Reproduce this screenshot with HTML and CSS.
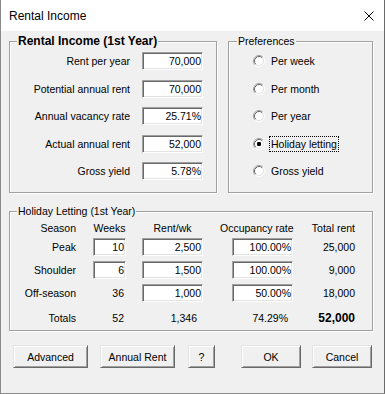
FILE: index.html
```html
<!DOCTYPE html>
<html>
<head>
<meta charset="utf-8">
<link rel="stylesheet" href="styles.css">
</head>
<body>
<div class="window">
  <div class="titlebar">
    <span class="title">Rental Income</span>
    <svg class="close" width="10" height="10" viewBox="0 0 10 10"><path d="M0.5 0.5 L9.5 9.5 M9.5 0.5 L0.5 9.5" stroke="#000" stroke-width="1" fill="none"/></svg>
  </div>
  <div class="content">
    <div class="top-row">
      <div class="group group-income">
        <div class="group-title bold">Rental Income (1st Year)</div>
        <div class="form-grid">
          <div class="lbl">Rent per year</div><div class="field">70,000</div>
          <div class="lbl">Potential annual rent</div><div class="field">70,000</div>
          <div class="lbl">Annual vacancy rate</div><div class="field">25.71%</div>
          <div class="lbl">Actual annual rent</div><div class="field">52,000</div>
          <div class="lbl">Gross yield</div><div class="field">5.78%</div>
        </div>
      </div>
      <div class="group group-prefs">
        <div class="group-title prefs-title">Preferences</div>
        <div class="radio-list">
          <div class="radio-row"><svg class="radio" width="12" height="12" viewBox="0 0 12 12"><circle cx="6" cy="6" r="4.5" fill="#fff"/><path d="M2.11 9.89 A5.5 5.5 0 0 1 9.89 2.11" stroke="#a0a0a0" fill="none"/><path d="M2.82 9.18 A4.5 4.5 0 0 1 9.18 2.82" stroke="#696969" fill="none"/><path d="M9.89 2.11 A5.5 5.5 0 0 1 2.11 9.89" stroke="#fff" fill="none"/><path d="M9.18 2.82 A4.5 4.5 0 0 1 2.82 9.18" stroke="#e3e3e3" fill="none"/></svg><span class="radio-label">Per week</span></div>
          <div class="radio-row"><svg class="radio" width="12" height="12" viewBox="0 0 12 12"><circle cx="6" cy="6" r="4.5" fill="#fff"/><path d="M2.11 9.89 A5.5 5.5 0 0 1 9.89 2.11" stroke="#a0a0a0" fill="none"/><path d="M2.82 9.18 A4.5 4.5 0 0 1 9.18 2.82" stroke="#696969" fill="none"/><path d="M9.89 2.11 A5.5 5.5 0 0 1 2.11 9.89" stroke="#fff" fill="none"/><path d="M9.18 2.82 A4.5 4.5 0 0 1 2.82 9.18" stroke="#e3e3e3" fill="none"/></svg><span class="radio-label">Per month</span></div>
          <div class="radio-row"><svg class="radio" width="12" height="12" viewBox="0 0 12 12"><circle cx="6" cy="6" r="4.5" fill="#fff"/><path d="M2.11 9.89 A5.5 5.5 0 0 1 9.89 2.11" stroke="#a0a0a0" fill="none"/><path d="M2.82 9.18 A4.5 4.5 0 0 1 9.18 2.82" stroke="#696969" fill="none"/><path d="M9.89 2.11 A5.5 5.5 0 0 1 2.11 9.89" stroke="#fff" fill="none"/><path d="M9.18 2.82 A4.5 4.5 0 0 1 2.82 9.18" stroke="#e3e3e3" fill="none"/></svg><span class="radio-label">Per year</span></div>
          <div class="radio-row"><svg class="radio" width="12" height="12" viewBox="0 0 12 12"><circle cx="6" cy="6" r="4.5" fill="#fff"/><path d="M2.11 9.89 A5.5 5.5 0 0 1 9.89 2.11" stroke="#a0a0a0" fill="none"/><path d="M2.82 9.18 A4.5 4.5 0 0 1 9.18 2.82" stroke="#696969" fill="none"/><path d="M9.89 2.11 A5.5 5.5 0 0 1 2.11 9.89" stroke="#fff" fill="none"/><path d="M9.18 2.82 A4.5 4.5 0 0 1 2.82 9.18" stroke="#e3e3e3" fill="none"/><rect x="4" y="4" width="4" height="4" rx="1.2" fill="#000"/></svg><span class="radio-label focused">Holiday letting</span></div>
          <div class="radio-row"><svg class="radio" width="12" height="12" viewBox="0 0 12 12"><circle cx="6" cy="6" r="4.5" fill="#fff"/><path d="M2.11 9.89 A5.5 5.5 0 0 1 9.89 2.11" stroke="#a0a0a0" fill="none"/><path d="M2.82 9.18 A4.5 4.5 0 0 1 9.18 2.82" stroke="#696969" fill="none"/><path d="M9.89 2.11 A5.5 5.5 0 0 1 2.11 9.89" stroke="#fff" fill="none"/><path d="M9.18 2.82 A4.5 4.5 0 0 1 2.82 9.18" stroke="#e3e3e3" fill="none"/></svg><span class="radio-label">Gross yield</span></div>
        </div>
      </div>
    </div>
    <div class="group group-holiday">
      <div class="group-title">Holiday Letting (1st Year)</div>
      <div class="hl-row hl-head">
        <div class="h-season">Season</div>
        <div class="h-weeks">Weeks</div>
        <div class="h-rent">Rent/wk</div>
        <div class="h-occ">Occupancy rate</div>
        <div class="h-total">Total rent</div>
      </div>
      <div class="hl-row r-peak">
        <div class="c-season">Peak</div>
        <div class="c-weeks field">10</div>
        <div class="c-rent field">2,500</div>
        <div class="c-occ field">100.00%</div>
        <div class="c-total">25,000</div>
      </div>
      <div class="hl-row r-mid">
        <div class="c-season">Shoulder</div>
        <div class="c-weeks field">6</div>
        <div class="c-rent field">1,500</div>
        <div class="c-occ field">100.00%</div>
        <div class="c-total">9,000</div>
      </div>
      <div class="hl-row r-mid">
        <div class="c-season">Off-season</div>
        <div class="c-weeks plain">36</div>
        <div class="c-rent field">1,000</div>
        <div class="c-occ field">50.00%</div>
        <div class="c-total">18,000</div>
      </div>
      <div class="hl-row r-totals">
        <div class="c-season">Totals</div>
        <div class="c-weeks plain">52</div>
        <div class="c-rent plain t-rent">1,346</div>
        <div class="c-occ plain t-occ">74.29%</div>
        <div class="c-total bold-total">52,000</div>
      </div>
    </div>
    <div class="buttons">
      <div class="btn b-adv">Advanced</div>
      <div class="btn b-annual">Annual Rent</div>
      <div class="btn b-help">?</div>
      <div class="btn b-ok">OK</div>
      <div class="btn b-cancel">Cancel</div>
    </div>
  </div>
</div>
</body>
</html>
```

FILE: styles.css
```css
html, body {
  margin: 0;
  padding: 0;
}
body {
  background: #f0f0f0;
  font-family: "Liberation Sans", Arial, sans-serif;
  font-size: 10.5px;
  color: #000;
}
.window {
  width: 385px;
  height: 394px;
  box-sizing: border-box;
  border: 1px solid #8a8a8a;
  border-top: none;
  border-right-color: #6a6a6a;
  background: #f0f0f0;
  display: flex;
  flex-direction: column;
}
.titlebar {
  height: 31px;
  flex: none;
  background: #fff;
  display: flex;
  align-items: center;
  padding: 1px 10px 0 8px;
  box-sizing: border-box;
}
.title {
  font-size: 12px;
}
.close {
  margin-left: auto;
  display: block;
}
.content {
  padding: 10px 11px 0 8px;
  flex: 1;
}
.top-row {
  display: flex;
  gap: 11px;
}
.group {
  border: 1px solid #a0a0a0;
  box-shadow: inset 1px 1px 0 #fff, 1px 1px 0 #fff;
  box-sizing: border-box;
}
.group-income {
  width: 208px;
  height: 152px;
}
.group-prefs {
  width: 145px;
  height: 152px;
}
.group-holiday {
  width: 364px;
  height: 120px;
  margin-top: 18px;
}
.group-title {
  margin: -8px 0 0 7px;
  padding: 0 1px;
  background: #f0f0f0;
  width: fit-content;
  line-height: 14px;
  white-space: nowrap;
}
.group-title.bold {
  font-weight: bold;
  font-size: 12px;
}
.prefs-title {
  margin-left: 8px;
}
.form-grid {
  display: grid;
  grid-template-columns: 1fr 61px;
  column-gap: 12px;
  row-gap: 9.5px;
  grid-auto-rows: 18px;
  padding: 4px 13px 0 0;
}
.lbl {
  display: flex;
  align-items: center;
  justify-content: flex-end;
  white-space: nowrap;
}
.field {
  box-sizing: border-box;
  height: 18px;
  background: #fff;
  border: 1px solid;
  border-color: #a0a0a0 #fff #fff #a0a0a0;
  box-shadow: inset 1px 1px 0 #696969, inset -1px -1px 0 #e3e3e3;
  text-align: right;
  padding-right: 1px;
  line-height: 16px;
  white-space: nowrap;
}
.radio-list {
  display: grid;
  grid-auto-rows: 18px;
  row-gap: 9.5px;
  padding: 4px 0 0 24px;
}
.radio-row {
  display: flex;
  align-items: center;
}
.radio {
  display: block;
  flex: none;
}
.radio-label {
  margin-left: 4px;
  padding: 0 1px;
  border: 1px solid transparent;
  line-height: 14px;
  white-space: nowrap;
}
.radio-label.focused {
  border: 1px dotted #000;
}
.hl-row {
  display: flex;
  align-items: center;
  height: 18px;
  white-space: nowrap;
}
.hl-head {
  height: 14px;
  margin-top: 3px;
}
.r-peak {
  margin-top: 3px;
}
.r-mid {
  margin-top: 5px;
}
.r-totals {
  margin-top: 7px;
}
.h-season, .c-season {
  width: 66px;
  text-align: right;
  flex: none;
}
.h-weeks {
  width: 33px;
  margin-left: 17px;
  text-align: center;
  flex: none;
}
.h-rent {
  width: 61px;
  margin-left: 16px;
  text-align: center;
  flex: none;
}
.h-occ {
  width: 75px;
  margin-left: 17px;
  flex: none;
}
.h-total {
  width: 59px;
  margin-left: 1px;
  text-align: right;
  flex: none;
}
.c-weeks {
  width: 33px;
  margin-left: 17px;
  flex: none;
}
.c-rent {
  width: 61px;
  margin-left: 16px;
  flex: none;
}
.c-occ {
  width: 61px;
  margin-left: 29px;
  flex: none;
}
.c-total {
  width: 61px;
  margin-left: 1px;
  text-align: right;
  flex: none;
}
.plain {
  text-align: right;
  box-sizing: border-box;
  padding-right: 2px;
}
.t-rent {
  padding-right: 6px;
}
.t-occ {
  padding-right: 5px;
}
.bold-total {
  font-weight: bold;
  font-size: 12px;
}
.buttons {
  display: flex;
  margin-top: 14px;
}
.btn {
  box-sizing: border-box;
  height: 23px;
  background: #f0f0f0;
  border: 1px solid;
  border-color: #e3e3e3 #696969 #696969 #e3e3e3;
  box-shadow: inset 1px 1px 0 #fff, inset -1px -1px 0 #a0a0a0;
  display: flex;
  align-items: center;
  justify-content: center;
  white-space: nowrap;
  flex: none;
}
.b-adv {
  width: 75px;
  margin-left: 4px;
}
.b-annual {
  width: 75px;
  margin-left: 12px;
}
.b-help {
  width: 27px;
  margin-left: 13px;
}
.b-ok {
  width: 60px;
  margin-left: 26px;
}
.b-cancel {
  width: 60px;
  margin-left: 11px;
}
```
